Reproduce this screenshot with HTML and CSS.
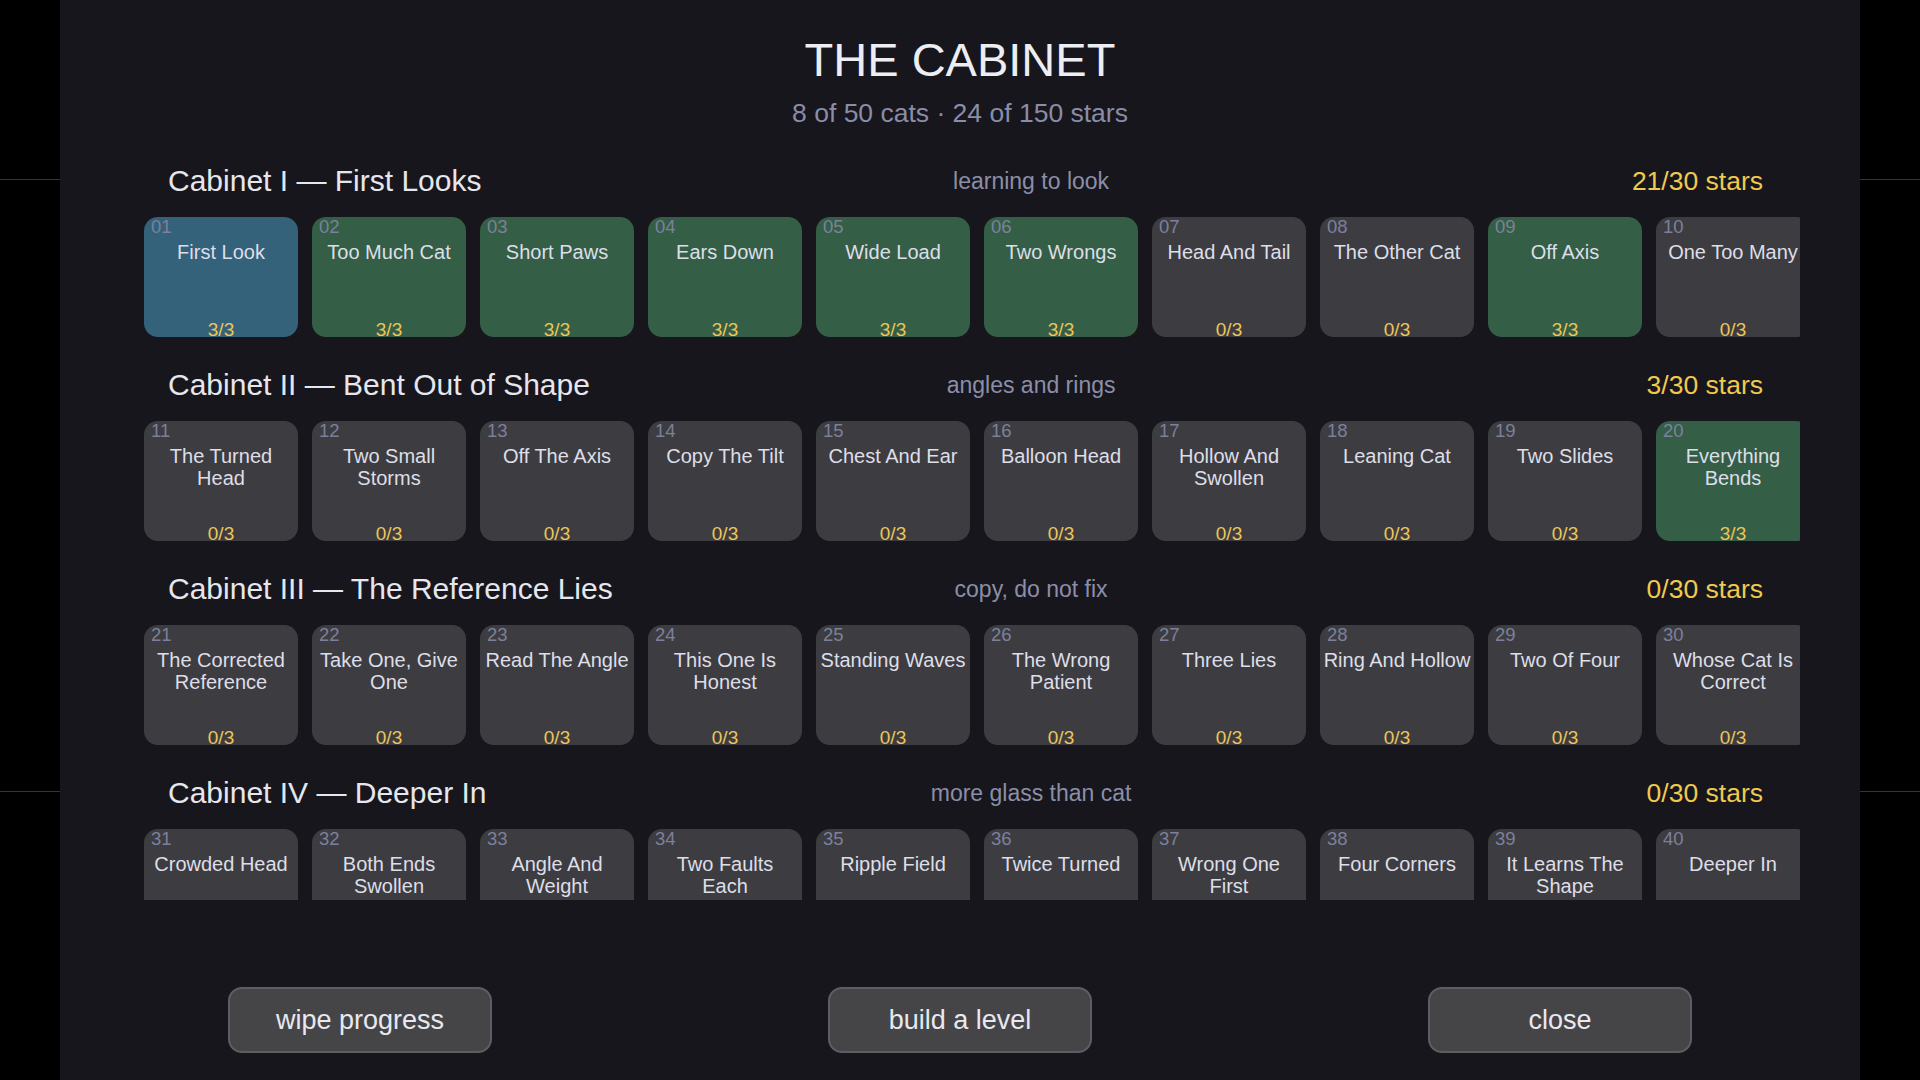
FILE: index.html
```html
<!DOCTYPE html>
<html lang="en">
<head>
<meta charset="utf-8">
<title>The Cabinet</title>
<link rel="stylesheet" href="styles.css">
</head>
<body>
<main class="cabinet">
  <header class="cabinet-head">
    <h1 class="cabinet-title">THE CABINET</h1>
    <div class="cabinet-summary">8 of 50 cats · 24 of 150 stars</div>
  </header>

  <div class="shelves">
    <section class="shelf">
      <div class="shelf-head">
        <h2 class="shelf-name">Cabinet I — First Looks</h2>
        <span class="shelf-tag">learning to look</span>
        <span class="shelf-stars">21/30 stars</span>
      </div>
      <div class="drawers">
        <button class="drawer is-current"><span class="drawer-no">01</span><span class="drawer-name">First Look</span><span class="drawer-stars">3/3</span></button>
        <button class="drawer is-done"><span class="drawer-no">02</span><span class="drawer-name">Too Much Cat</span><span class="drawer-stars">3/3</span></button>
        <button class="drawer is-done"><span class="drawer-no">03</span><span class="drawer-name">Short Paws</span><span class="drawer-stars">3/3</span></button>
        <button class="drawer is-done"><span class="drawer-no">04</span><span class="drawer-name">Ears Down</span><span class="drawer-stars">3/3</span></button>
        <button class="drawer is-done"><span class="drawer-no">05</span><span class="drawer-name">Wide Load</span><span class="drawer-stars">3/3</span></button>
        <button class="drawer is-done"><span class="drawer-no">06</span><span class="drawer-name">Two Wrongs</span><span class="drawer-stars">3/3</span></button>
        <button class="drawer"><span class="drawer-no">07</span><span class="drawer-name">Head And Tail</span><span class="drawer-stars">0/3</span></button>
        <button class="drawer"><span class="drawer-no">08</span><span class="drawer-name">The Other Cat</span><span class="drawer-stars">0/3</span></button>
        <button class="drawer is-done"><span class="drawer-no">09</span><span class="drawer-name">Off Axis</span><span class="drawer-stars">3/3</span></button>
        <button class="drawer"><span class="drawer-no">10</span><span class="drawer-name">One Too Many</span><span class="drawer-stars">0/3</span></button>
      </div>
    </section>

    <section class="shelf">
      <div class="shelf-head">
        <h2 class="shelf-name">Cabinet II — Bent Out of Shape</h2>
        <span class="shelf-tag">angles and rings</span>
        <span class="shelf-stars">3/30 stars</span>
      </div>
      <div class="drawers">
        <button class="drawer"><span class="drawer-no">11</span><span class="drawer-name">The Turned Head</span><span class="drawer-stars">0/3</span></button>
        <button class="drawer"><span class="drawer-no">12</span><span class="drawer-name">Two Small Storms</span><span class="drawer-stars">0/3</span></button>
        <button class="drawer"><span class="drawer-no">13</span><span class="drawer-name">Off The Axis</span><span class="drawer-stars">0/3</span></button>
        <button class="drawer"><span class="drawer-no">14</span><span class="drawer-name">Copy The Tilt</span><span class="drawer-stars">0/3</span></button>
        <button class="drawer"><span class="drawer-no">15</span><span class="drawer-name">Chest And Ear</span><span class="drawer-stars">0/3</span></button>
        <button class="drawer"><span class="drawer-no">16</span><span class="drawer-name">Balloon Head</span><span class="drawer-stars">0/3</span></button>
        <button class="drawer"><span class="drawer-no">17</span><span class="drawer-name">Hollow And Swollen</span><span class="drawer-stars">0/3</span></button>
        <button class="drawer"><span class="drawer-no">18</span><span class="drawer-name">Leaning Cat</span><span class="drawer-stars">0/3</span></button>
        <button class="drawer"><span class="drawer-no">19</span><span class="drawer-name">Two Slides</span><span class="drawer-stars">0/3</span></button>
        <button class="drawer is-done"><span class="drawer-no">20</span><span class="drawer-name">Everything Bends</span><span class="drawer-stars">3/3</span></button>
      </div>
    </section>

    <section class="shelf">
      <div class="shelf-head">
        <h2 class="shelf-name">Cabinet III — The Reference Lies</h2>
        <span class="shelf-tag">copy, do not fix</span>
        <span class="shelf-stars">0/30 stars</span>
      </div>
      <div class="drawers">
        <button class="drawer"><span class="drawer-no">21</span><span class="drawer-name">The Corrected Reference</span><span class="drawer-stars">0/3</span></button>
        <button class="drawer"><span class="drawer-no">22</span><span class="drawer-name">Take One, Give One</span><span class="drawer-stars">0/3</span></button>
        <button class="drawer"><span class="drawer-no">23</span><span class="drawer-name">Read The Angle</span><span class="drawer-stars">0/3</span></button>
        <button class="drawer"><span class="drawer-no">24</span><span class="drawer-name">This One Is Honest</span><span class="drawer-stars">0/3</span></button>
        <button class="drawer"><span class="drawer-no">25</span><span class="drawer-name">Standing Waves</span><span class="drawer-stars">0/3</span></button>
        <button class="drawer"><span class="drawer-no">26</span><span class="drawer-name">The Wrong Patient</span><span class="drawer-stars">0/3</span></button>
        <button class="drawer"><span class="drawer-no">27</span><span class="drawer-name">Three Lies</span><span class="drawer-stars">0/3</span></button>
        <button class="drawer"><span class="drawer-no">28</span><span class="drawer-name">Ring And Hollow</span><span class="drawer-stars">0/3</span></button>
        <button class="drawer"><span class="drawer-no">29</span><span class="drawer-name">Two Of Four</span><span class="drawer-stars">0/3</span></button>
        <button class="drawer"><span class="drawer-no">30</span><span class="drawer-name">Whose Cat Is Correct</span><span class="drawer-stars">0/3</span></button>
      </div>
    </section>

    <section class="shelf">
      <div class="shelf-head">
        <h2 class="shelf-name">Cabinet IV — Deeper In</h2>
        <span class="shelf-tag">more glass than cat</span>
        <span class="shelf-stars">0/30 stars</span>
      </div>
      <div class="drawers">
        <button class="drawer"><span class="drawer-no">31</span><span class="drawer-name">Crowded Head</span><span class="drawer-stars">0/3</span></button>
        <button class="drawer"><span class="drawer-no">32</span><span class="drawer-name">Both Ends Swollen</span><span class="drawer-stars">0/3</span></button>
        <button class="drawer"><span class="drawer-no">33</span><span class="drawer-name">Angle And Weight</span><span class="drawer-stars">0/3</span></button>
        <button class="drawer"><span class="drawer-no">34</span><span class="drawer-name">Two Faults<br>Each</span><span class="drawer-stars">0/3</span></button>
        <button class="drawer"><span class="drawer-no">35</span><span class="drawer-name">Ripple Field</span><span class="drawer-stars">0/3</span></button>
        <button class="drawer"><span class="drawer-no">36</span><span class="drawer-name">Twice Turned</span><span class="drawer-stars">0/3</span></button>
        <button class="drawer"><span class="drawer-no">37</span><span class="drawer-name">Wrong One<br>First</span><span class="drawer-stars">0/3</span></button>
        <button class="drawer"><span class="drawer-no">38</span><span class="drawer-name">Four Corners</span><span class="drawer-stars">0/3</span></button>
        <button class="drawer"><span class="drawer-no">39</span><span class="drawer-name">It Learns The Shape</span><span class="drawer-stars">0/3</span></button>
        <button class="drawer"><span class="drawer-no">40</span><span class="drawer-name">Deeper In</span><span class="drawer-stars">0/3</span></button>
      </div>
    </section>
  </div>

  <footer class="cabinet-actions">
    <button class="action">wipe progress</button>
    <button class="action">build a level</button>
    <button class="action">close</button>
  </footer>
</main>
</body>
</html>
```

FILE: styles.css
```css
* {
  box-sizing: border-box;
}

html,
body {
  margin: 0;
  height: 100%;
}

/* dark backdrop with the faint rules of the page underneath */
body {
  background-color: #000;
  background-image: linear-gradient(#34343a, #34343a), linear-gradient(#34343a, #34343a);
  background-size: 100% 1px, 100% 1px;
  background-position: 0 179px, 0 791px;
  background-repeat: no-repeat;
  font-family: "Liberation Sans", Arial, Helvetica, sans-serif;
  overflow: hidden;
}

.cabinet {
  width: 1800px;
  height: 1080px;
  margin: 0 auto;
  background: #17161c;
  display: flex;
  flex-direction: column;
}

/* title block */
.cabinet-head {
  text-align: center;
  padding-top: 33px;
}

.cabinet-title {
  margin: 0;
  font-size: 47px;
  line-height: 54px;
  font-weight: 400;
  color: #ededf4;
}

.cabinet-summary {
  margin-top: 11px;
  font-size: 26.5px;
  line-height: 30px;
  color: #8a8da8;
}

.shelves {
  height: 772px;
  margin: 0 60px;
  padding: 35px 0 0 24px;
  overflow: hidden;
}

.shelf {
  margin-bottom: 30px;
}

.shelf-head {
  display: grid;
  grid-template-columns: 1fr 1fr 0.772fr;
  align-items: center;
  height: 36px;
  padding: 0 37px 0 24px;
  margin-bottom: 18px;
}

.shelf-name {
  margin: 0;
  font-size: 30px;
  line-height: 36px;
  font-weight: 400;
  color: #e6e6ee;
  white-space: nowrap;
}

.shelf-tag {
  text-align: center;
  font-size: 23px;
  color: #8b8ea8;
  white-space: nowrap;
}

.shelf-stars {
  text-align: right;
  font-size: 26.5px;
  color: #f0c94f;
  white-space: nowrap;
}

/* level tiles */
.drawers {
  display: flex;
  gap: 14px;
}

.drawer {
  flex: 0 0 154px;
  height: 120px;
  display: flex;
  flex-direction: column;
  align-items: stretch;
  padding: 1px 0 0;
  margin: 0;
  border: 0;
  border-radius: 14px;
  background: #3d3d41;
  font-family: inherit;
  text-align: center;
  overflow: hidden;
  cursor: pointer;
}

.drawer.is-done {
  background: #345f46;
}

.drawer.is-current {
  background: #34627a;
}

.drawer-no {
  display: block;
  padding-left: 7px;
  text-align: left;
  font-size: 18.5px;
  line-height: 18px;
  color: #7c809c;
}

.drawer-name {
  display: block;
  margin-top: 5px;
  padding: 0 3px;
  font-size: 20px;
  line-height: 22px;
  color: #dedee8;
}

.drawer-stars {
  display: block;
  margin-top: auto;
  font-size: 19px;
  line-height: 15px;
  color: #e9c65a;
}

/* bottom actions */
.cabinet-actions {
  display: flex;
  justify-content: space-around;
  padding-top: 87px;
}

.action {
  width: 264px;
  height: 66px;
  border: 2px solid #5d5d62;
  border-radius: 14px;
  background: #454548;
  color: #e8e8f0;
  font-family: inherit;
  font-size: 27px;
  cursor: pointer;
}
```
